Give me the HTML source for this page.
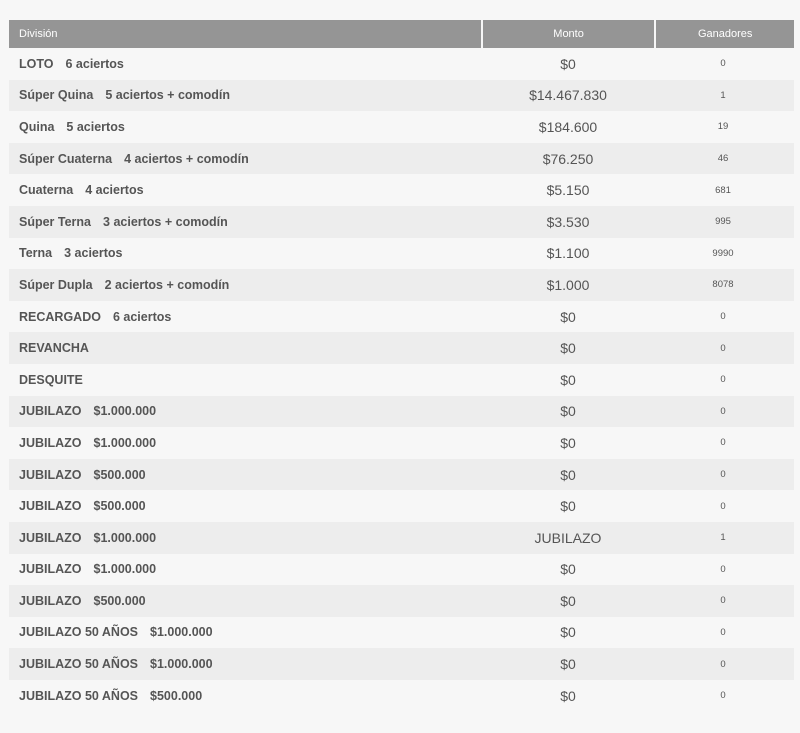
<!DOCTYPE html>
<html><head><meta charset="utf-8"><style>
body{margin:0;background:#f7f7f7;font-family:"Liberation Sans",Arial,sans-serif;color:#555;width:800px;height:733px;overflow:hidden}
.t{position:absolute;left:9px;top:20px;width:785px}
.r{display:flex;height:31.6px;align-items:center}
.h{height:28px;background:#959595;color:#fff;font-size:11px}
.h div+div{border-left:2px solid #f7f7f7;height:28px;line-height:28px}
.r:nth-child(odd):not(.h){background:#ededed}
.a{width:463px;padding-left:10px;font-weight:bold;font-size:12.5px}
.b{width:172px;text-align:center;font-size:14px}
.c{width:138px;text-align:center;font-size:9.5px}
.h .a{font-weight:normal;font-size:11px}
.h .b,.h .c{font-size:11px}
.s{display:inline-block;width:12px}
</style></head><body><div class="t">
<div class="r h"><div class="a">División</div><div class="b">Monto</div><div class="c">Ganadores</div></div>
<div class="r"><div class="a">LOTO<span class="s"></span>6 aciertos</div><div class="b">$0</div><div class="c">0</div></div>
<div class="r"><div class="a">Súper Quina<span class="s"></span>5 aciertos + comodín</div><div class="b">$14.467.830</div><div class="c">1</div></div>
<div class="r"><div class="a">Quina<span class="s"></span>5 aciertos</div><div class="b">$184.600</div><div class="c">19</div></div>
<div class="r"><div class="a">Súper Cuaterna<span class="s"></span>4 aciertos + comodín</div><div class="b">$76.250</div><div class="c">46</div></div>
<div class="r"><div class="a">Cuaterna<span class="s"></span>4 aciertos</div><div class="b">$5.150</div><div class="c">681</div></div>
<div class="r"><div class="a">Súper Terna<span class="s"></span>3 aciertos + comodín</div><div class="b">$3.530</div><div class="c">995</div></div>
<div class="r"><div class="a">Terna<span class="s"></span>3 aciertos</div><div class="b">$1.100</div><div class="c">9990</div></div>
<div class="r"><div class="a">Súper Dupla<span class="s"></span>2 aciertos + comodín</div><div class="b">$1.000</div><div class="c">8078</div></div>
<div class="r"><div class="a">RECARGADO<span class="s"></span>6 aciertos</div><div class="b">$0</div><div class="c">0</div></div>
<div class="r"><div class="a">REVANCHA</div><div class="b">$0</div><div class="c">0</div></div>
<div class="r"><div class="a">DESQUITE</div><div class="b">$0</div><div class="c">0</div></div>
<div class="r"><div class="a">JUBILAZO<span class="s"></span>$1.000.000</div><div class="b">$0</div><div class="c">0</div></div>
<div class="r"><div class="a">JUBILAZO<span class="s"></span>$1.000.000</div><div class="b">$0</div><div class="c">0</div></div>
<div class="r"><div class="a">JUBILAZO<span class="s"></span>$500.000</div><div class="b">$0</div><div class="c">0</div></div>
<div class="r"><div class="a">JUBILAZO<span class="s"></span>$500.000</div><div class="b">$0</div><div class="c">0</div></div>
<div class="r"><div class="a">JUBILAZO<span class="s"></span>$1.000.000</div><div class="b">JUBILAZO</div><div class="c">1</div></div>
<div class="r"><div class="a">JUBILAZO<span class="s"></span>$1.000.000</div><div class="b">$0</div><div class="c">0</div></div>
<div class="r"><div class="a">JUBILAZO<span class="s"></span>$500.000</div><div class="b">$0</div><div class="c">0</div></div>
<div class="r"><div class="a">JUBILAZO 50 AÑOS<span class="s"></span>$1.000.000</div><div class="b">$0</div><div class="c">0</div></div>
<div class="r"><div class="a">JUBILAZO 50 AÑOS<span class="s"></span>$1.000.000</div><div class="b">$0</div><div class="c">0</div></div>
<div class="r"><div class="a">JUBILAZO 50 AÑOS<span class="s"></span>$500.000</div><div class="b">$0</div><div class="c">0</div></div>
</div></body></html>
